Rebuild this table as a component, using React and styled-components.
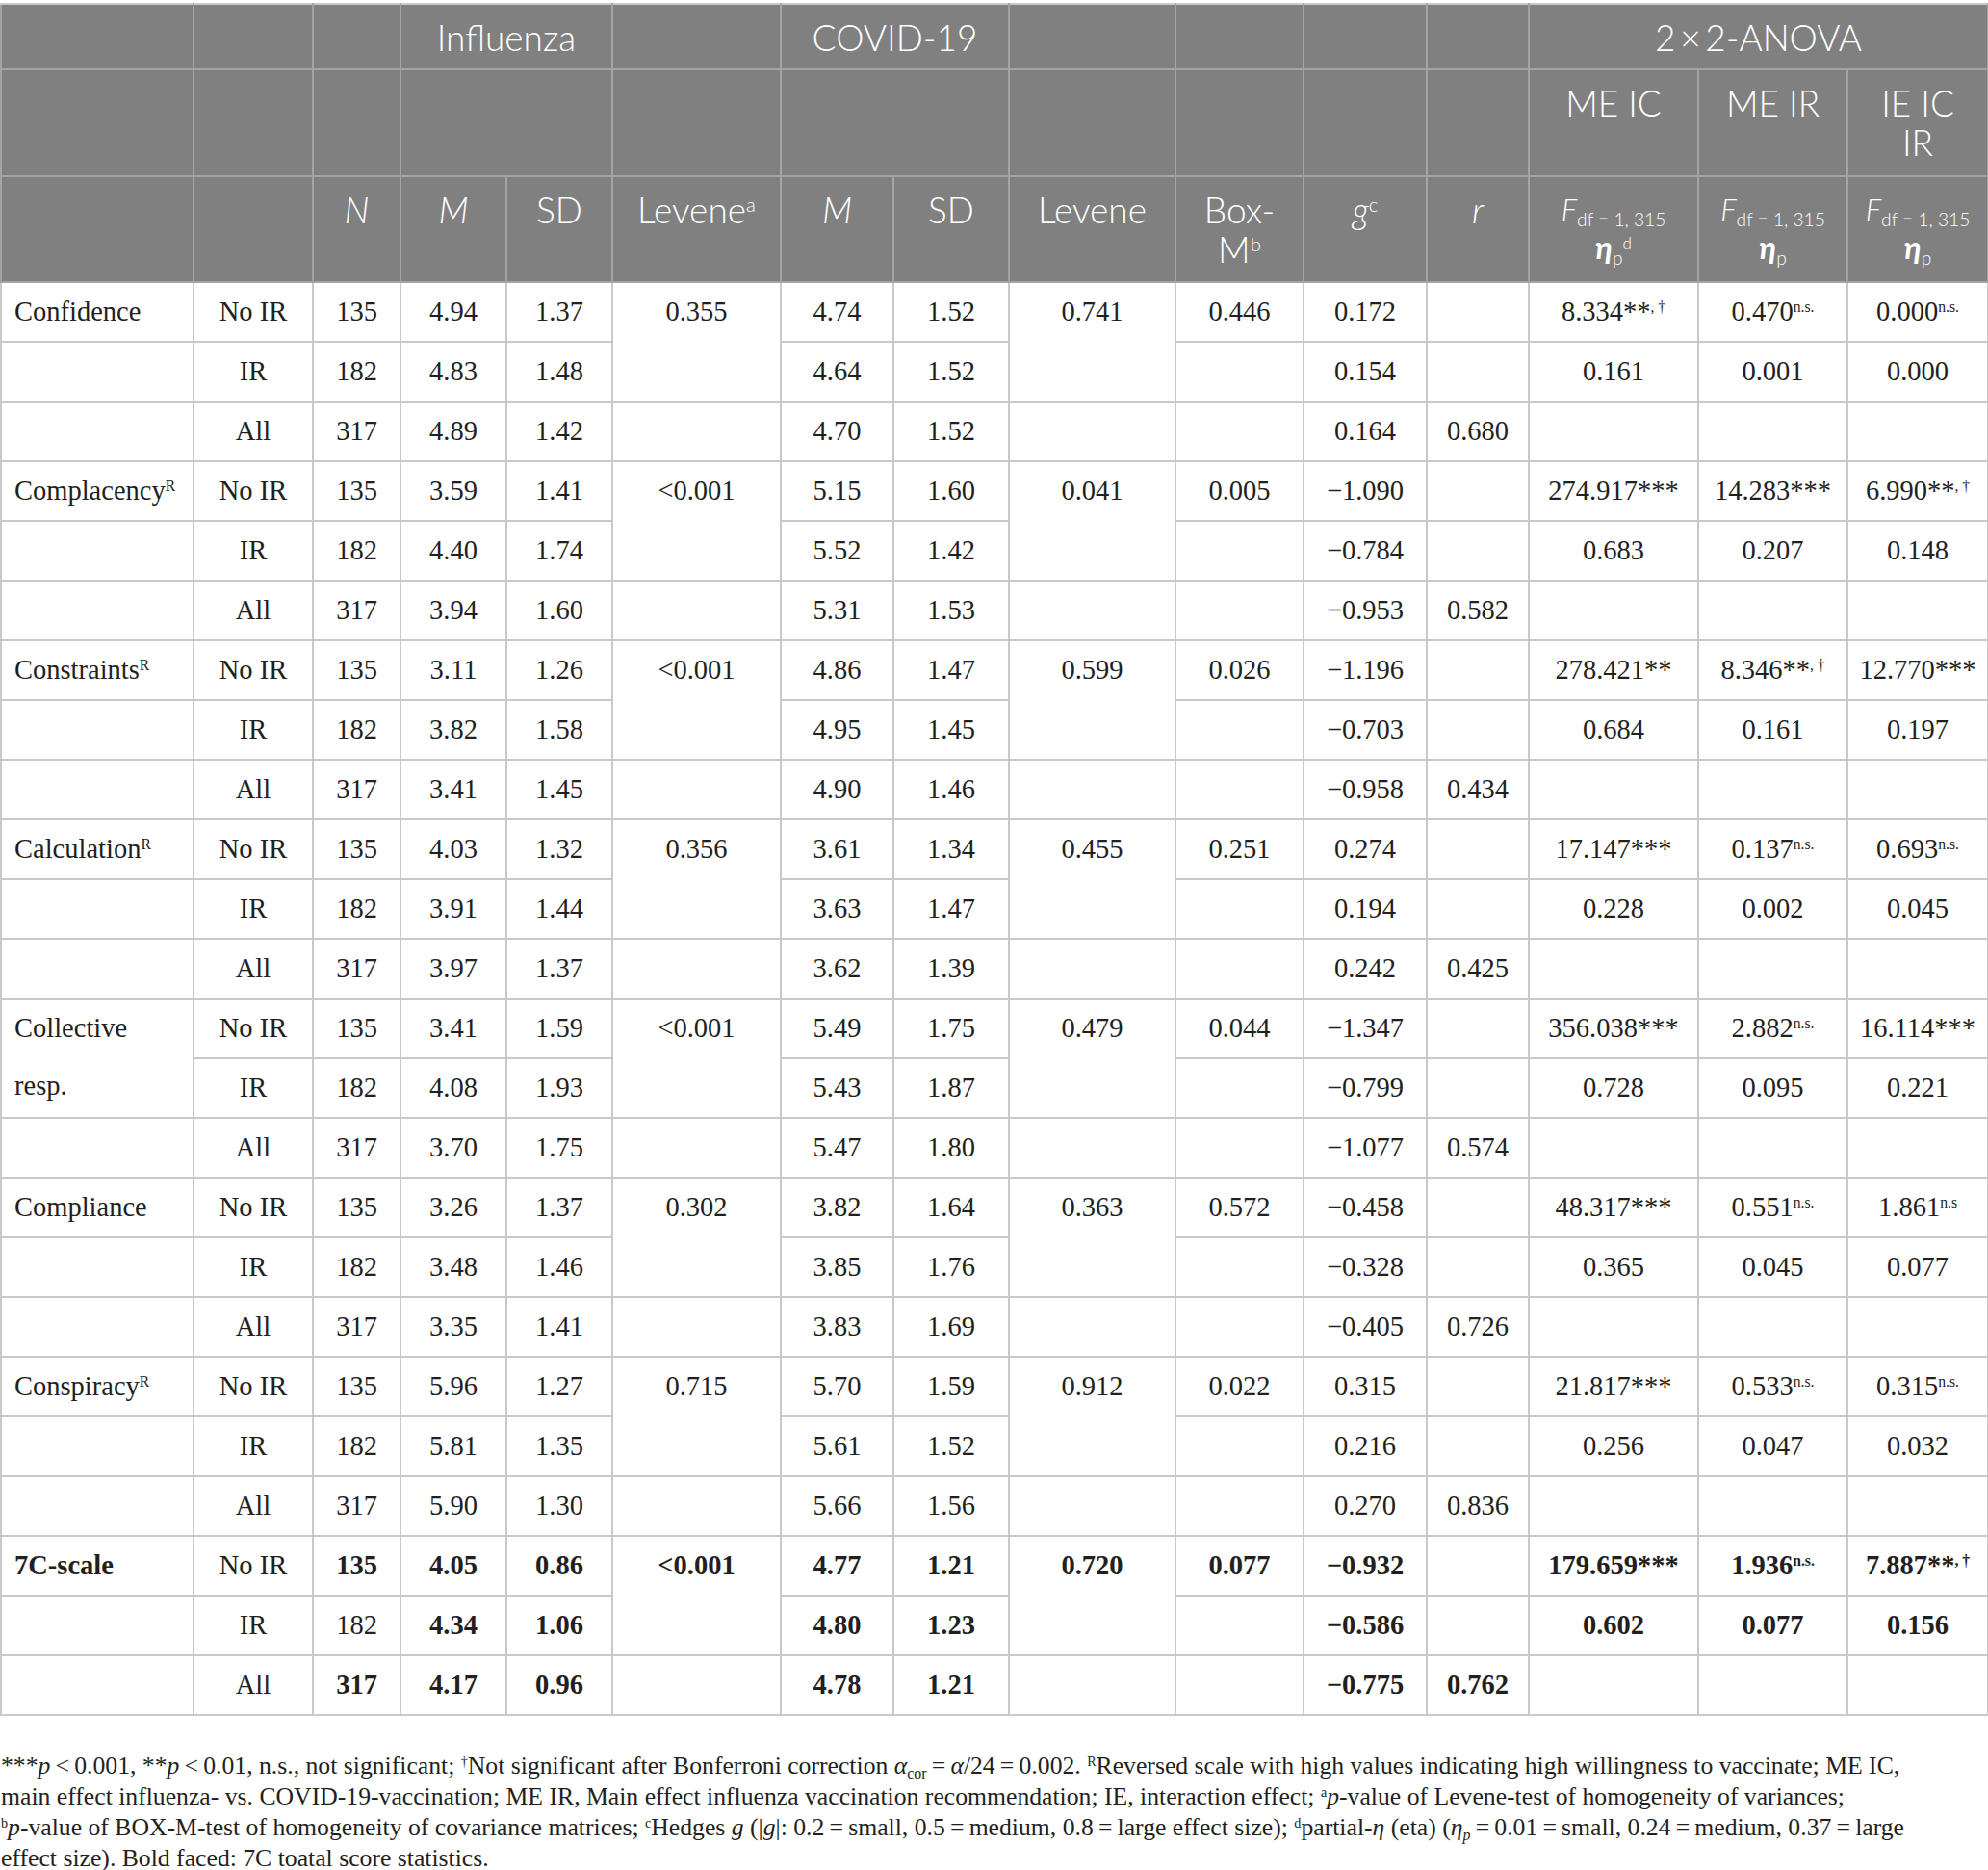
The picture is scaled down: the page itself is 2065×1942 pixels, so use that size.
import React from 'react';
import styled, { createGlobalStyle } from 'styled-components';

const GlobalStyle = createGlobalStyle`
  body {
    margin: 0;
    background: #ffffff;
  }
`;

const cols = [200, 124, 91, 110, 110, 175, 117, 120, 173, 133, 128, 106, 176, 155, 146];

const Sup = styled.sup`
  font-size: 0.55em;
  vertical-align: 0.6em;
  line-height: 0;
`;

const Sub = styled.sub`
  font-size: 0.62em;
  vertical-align: -0.3em;
  line-height: 0;
`;

const I = styled.i`
  font-style: italic;
`;

const ns = (v) => <>{v}<Sup>n.s.</Sup></>;
const nsb = (v) => <>{v}<Sup>n.s</Sup></>;
const dag = (v) => <>{v}**<Sup>, †</Sup></>;

const groups = [
  {
    label: 'Confidence', levA: '0.355', levB: '0.741',
    rows: [
      ['No IR', '135', '4.94', '1.37', '4.74', '1.52', '0.446', '0.172', '', dag('8.334'), ns('0.470'), ns('0.000')],
      ['IR', '182', '4.83', '1.48', '4.64', '1.52', '', '0.154', '', '0.161', '0.001', '0.000'],
      ['All', '317', '4.89', '1.42', '4.70', '1.52', '', '0.164', '0.680', '', '', ''],
    ],
  },
  {
    label: 'Complacency', rev: true, levA: '<0.001', levB: '0.041',
    rows: [
      ['No IR', '135', '3.59', '1.41', '5.15', '1.60', '0.005', '−1.090', '', '274.917***', '14.283***', dag('6.990')],
      ['IR', '182', '4.40', '1.74', '5.52', '1.42', '', '−0.784', '', '0.683', '0.207', '0.148'],
      ['All', '317', '3.94', '1.60', '5.31', '1.53', '', '−0.953', '0.582', '', '', ''],
    ],
  },
  {
    label: 'Constraints', rev: true, levA: '<0.001', levB: '0.599',
    rows: [
      ['No IR', '135', '3.11', '1.26', '4.86', '1.47', '0.026', '−1.196', '', '278.421**', dag('8.346'), '12.770***'],
      ['IR', '182', '3.82', '1.58', '4.95', '1.45', '', '−0.703', '', '0.684', '0.161', '0.197'],
      ['All', '317', '3.41', '1.45', '4.90', '1.46', '', '−0.958', '0.434', '', '', ''],
    ],
  },
  {
    label: 'Calculation', rev: true, levA: '0.356', levB: '0.455',
    rows: [
      ['No IR', '135', '4.03', '1.32', '3.61', '1.34', '0.251', '0.274', '', '17.147***', ns('0.137'), ns('0.693')],
      ['IR', '182', '3.91', '1.44', '3.63', '1.47', '', '0.194', '', '0.228', '0.002', '0.045'],
      ['All', '317', '3.97', '1.37', '3.62', '1.39', '', '0.242', '0.425', '', '', ''],
    ],
  },
  {
    label: 'Collective', label2: 'resp.', levA: '<0.001', levB: '0.479',
    rows: [
      ['No IR', '135', '3.41', '1.59', '5.49', '1.75', '0.044', '−1.347', '', '356.038***', ns('2.882'), '16.114***'],
      ['IR', '182', '4.08', '1.93', '5.43', '1.87', '', '−0.799', '', '0.728', '0.095', '0.221'],
      ['All', '317', '3.70', '1.75', '5.47', '1.80', '', '−1.077', '0.574', '', '', ''],
    ],
  },
  {
    label: 'Compliance', levA: '0.302', levB: '0.363',
    rows: [
      ['No IR', '135', '3.26', '1.37', '3.82', '1.64', '0.572', '−0.458', '', '48.317***', ns('0.551'), nsb('1.861')],
      ['IR', '182', '3.48', '1.46', '3.85', '1.76', '', '−0.328', '', '0.365', '0.045', '0.077'],
      ['All', '317', '3.35', '1.41', '3.83', '1.69', '', '−0.405', '0.726', '', '', ''],
    ],
  },
  {
    label: 'Conspiracy', rev: true, levA: '0.715', levB: '0.912',
    rows: [
      ['No IR', '135', '5.96', '1.27', '5.70', '1.59', '0.022', '0.315', '', '21.817***', ns('0.533'), ns('0.315')],
      ['IR', '182', '5.81', '1.35', '5.61', '1.52', '', '0.216', '', '0.256', '0.047', '0.032'],
      ['All', '317', '5.90', '1.30', '5.66', '1.56', '', '0.270', '0.836', '', '', ''],
    ],
  },
  {
    label: '7C-scale', bold: true, levA: '<0.001', levB: '0.720',
    rows: [
      ['No IR', '135', '4.05', '0.86', '4.77', '1.21', '0.077', '−0.932', '', '179.659***', ns('1.936'), dag('7.887')],
      ['IR', '182', '4.34', '1.06', '4.80', '1.23', '', '−0.586', '', '0.602', '0.077', '0.156'],
      ['All', '317', '4.17', '0.96', '4.78', '1.21', '', '−0.775', '0.762', '', '', ''],
    ],
  },
];

const Page = styled.div`
  padding-top: 3px;
  width: 2065px;
`;

const Table = styled.table`
  width: 2064px;
  table-layout: fixed;
  border-collapse: collapse;
  border-top: 2px solid #c9c9c9;
`;

const HeadRow = styled.tr`
  height: ${(p) => p.$h}px;
`;

const HeadCell = styled.th`
  background: #7f807f;
  color: #ffffff;
  font-family: Lato, "Open Sans", sans-serif;
  font-weight: 300;
  font-size: 37px;
  line-height: 41px;
  text-align: center;
  vertical-align: top;
  padding: 13px 4px 0;
  border: 2px solid #a3a4a3;
  border-top-color: #c9c9c9;
  white-space: nowrap;
`;

const FormulaHead = styled.span`
  display: inline-block;
  font-size: 31px;
  line-height: 40px;
`;

const Eta = styled.i`
  font-style: italic;
  font-weight: 700;
  font-size: 1.05em;
`;

const BodyRow = styled.tr`
  height: 62px;
`;

const Cell = styled.td`
  font-family: "Liberation Serif", "Times New Roman", serif;
  font-size: 28.5px;
  font-weight: ${(p) => (p.$bold ? 700 : 400)};
  color: #231f20;
  text-align: ${(p) => (p.$left ? 'left' : 'center')};
  vertical-align: ${(p) => (p.$top ? 'top' : 'middle')};
  line-height: ${(p) => (p.$top ? '60px' : '32px')};
  padding: ${(p) => (p.$left ? '0 10px 0 13px' : '0 4px')};
  border: 2px solid #c9c9c9;
  white-space: nowrap;
`;

const Footnote = styled.div`
  font-family: "Liberation Serif", "Times New Roman", serif;
  font-size: 25.7px;
  line-height: 32px;
  color: #231f20;
  padding: 36px 0 0 1px;
  white-space: nowrap;
`;

const FootLine = styled.div``;

function HeaderRows() {
  const F = (d) => (
    <FormulaHead>
      <I>F</I><Sub>df = 1, 315</Sub>
      <br />
      <Eta>η</Eta><Sub>p</Sub>{d && <Sup>d</Sup>}
    </FormulaHead>
  );
  return (
    <thead>
      <HeadRow $h={68}>
        <HeadCell />
        <HeadCell />
        <HeadCell />
        <HeadCell colSpan={2}>Influenza</HeadCell>
        <HeadCell />
        <HeadCell colSpan={2}>COVID-19</HeadCell>
        <HeadCell />
        <HeadCell />
        <HeadCell />
        <HeadCell />
        <HeadCell colSpan={3}>2{'\u2009'}×{'\u2009'}2-ANOVA</HeadCell>
      </HeadRow>
      <HeadRow $h={111}>
        <HeadCell />
        <HeadCell />
        <HeadCell />
        <HeadCell colSpan={2} />
        <HeadCell />
        <HeadCell colSpan={2} />
        <HeadCell />
        <HeadCell />
        <HeadCell />
        <HeadCell />
        <HeadCell>ME IC</HeadCell>
        <HeadCell>ME IR</HeadCell>
        <HeadCell>IE IC<br />IR</HeadCell>
      </HeadRow>
      <HeadRow $h={110}>
        <HeadCell />
        <HeadCell />
        <HeadCell><I>N</I></HeadCell>
        <HeadCell><I>M</I></HeadCell>
        <HeadCell>SD</HeadCell>
        <HeadCell>Levene<Sup>a</Sup></HeadCell>
        <HeadCell><I>M</I></HeadCell>
        <HeadCell>SD</HeadCell>
        <HeadCell>Levene</HeadCell>
        <HeadCell>Box-<br />M<Sup>b</Sup></HeadCell>
        <HeadCell><I>g</I><Sup>c</Sup></HeadCell>
        <HeadCell><I>r</I></HeadCell>
        <HeadCell>{F(true)}</HeadCell>
        <HeadCell>{F(false)}</HeadCell>
        <HeadCell>{F(false)}</HeadCell>
      </HeadRow>
    </thead>
  );
}

function GroupRows({ group }) {
  const b = !!group.bold;
  return group.rows.map((r, i) => {
    const [grp, n, m1, sd1, m2, sd2, box, g, rr, f1, f2, f3] = r;
    let label = null;
    if (i === 0) {
      label = group.label2 ? (
        <Cell $left $top $bold={b} rowSpan={2}>{group.label}<br />{group.label2}</Cell>
      ) : (
        <Cell $left $bold={b}>{group.label}{group.rev && <Sup>R</Sup>}</Cell>
      );
    } else if (!(group.label2 && i === 1)) {
      label = <Cell $left />;
    }
    return (
      <BodyRow key={i}>
        {label}
        <Cell>{grp}</Cell>
        <Cell $bold={b && i !== 1}>{n}</Cell>
        <Cell $bold={b}>{m1}</Cell>
        <Cell $bold={b}>{sd1}</Cell>
        {i === 0 && <Cell $top rowSpan={2} $bold={b}>{group.levA}</Cell>}
        {i === 2 && <Cell />}
        <Cell $bold={b}>{m2}</Cell>
        <Cell $bold={b}>{sd2}</Cell>
        {i === 0 && <Cell $top rowSpan={2} $bold={b}>{group.levB}</Cell>}
        {i === 2 && <Cell />}
        <Cell $bold={b}>{box}</Cell>
        <Cell $bold={b}>{g}</Cell>
        <Cell $bold={b}>{rr}</Cell>
        <Cell $bold={b}>{f1}</Cell>
        <Cell $bold={b}>{f2}</Cell>
        <Cell $bold={b}>{f3}</Cell>
      </BodyRow>
    );
  });
}

export default function App() {
  const t = '\u2009';
  return (
    <Page>
      <GlobalStyle />
      <Table>
        <colgroup>
          {cols.map((w, i) => <col key={i} style={{ width: w }} />)}
        </colgroup>
        <HeaderRows />
        <tbody>
          {groups.map((g) => <GroupRows key={g.label} group={g} />)}
        </tbody>
      </Table>
      <Footnote>
        <FootLine>
          ***<I>p</I>{t}&lt;{t}0.001, **<I>p</I>{t}&lt;{t}0.01, n.s., not significant; <Sup>†</Sup>Not significant after Bonferroni correction <I>α</I><Sub>cor</Sub>{t}={t}<I>α</I>/24{t}={t}0.002. <Sup>R</Sup>Reversed scale with high values indicating high willingness to vaccinate; ME IC,
        </FootLine>
        <FootLine>
          main effect influenza- vs. COVID-19-vaccination; ME IR, Main effect influenza vaccination recommendation; IE, interaction effect; <Sup>a</Sup><I>p</I>-value of Levene-test of homogeneity of variances;
        </FootLine>
        <FootLine>
          <Sup>b</Sup><I>p</I>-value of BOX-M-test of homogeneity of covariance matrices; <Sup>c</Sup>Hedges <I>g</I> (|<I>g</I>|: 0.2{t}={t}small, 0.5{t}={t}medium, 0.8{t}={t}large effect size); <Sup>d</Sup>partial-<I>η</I> (eta) (<I>η</I><Sub><I>p</I></Sub>{t}={t}0.01{t}={t}small, 0.24{t}={t}medium, 0.37{t}={t}large
        </FootLine>
        <FootLine>effect size). Bold faced: 7C toatal score statistics.</FootLine>
      </Footnote>
    </Page>
  );
}
